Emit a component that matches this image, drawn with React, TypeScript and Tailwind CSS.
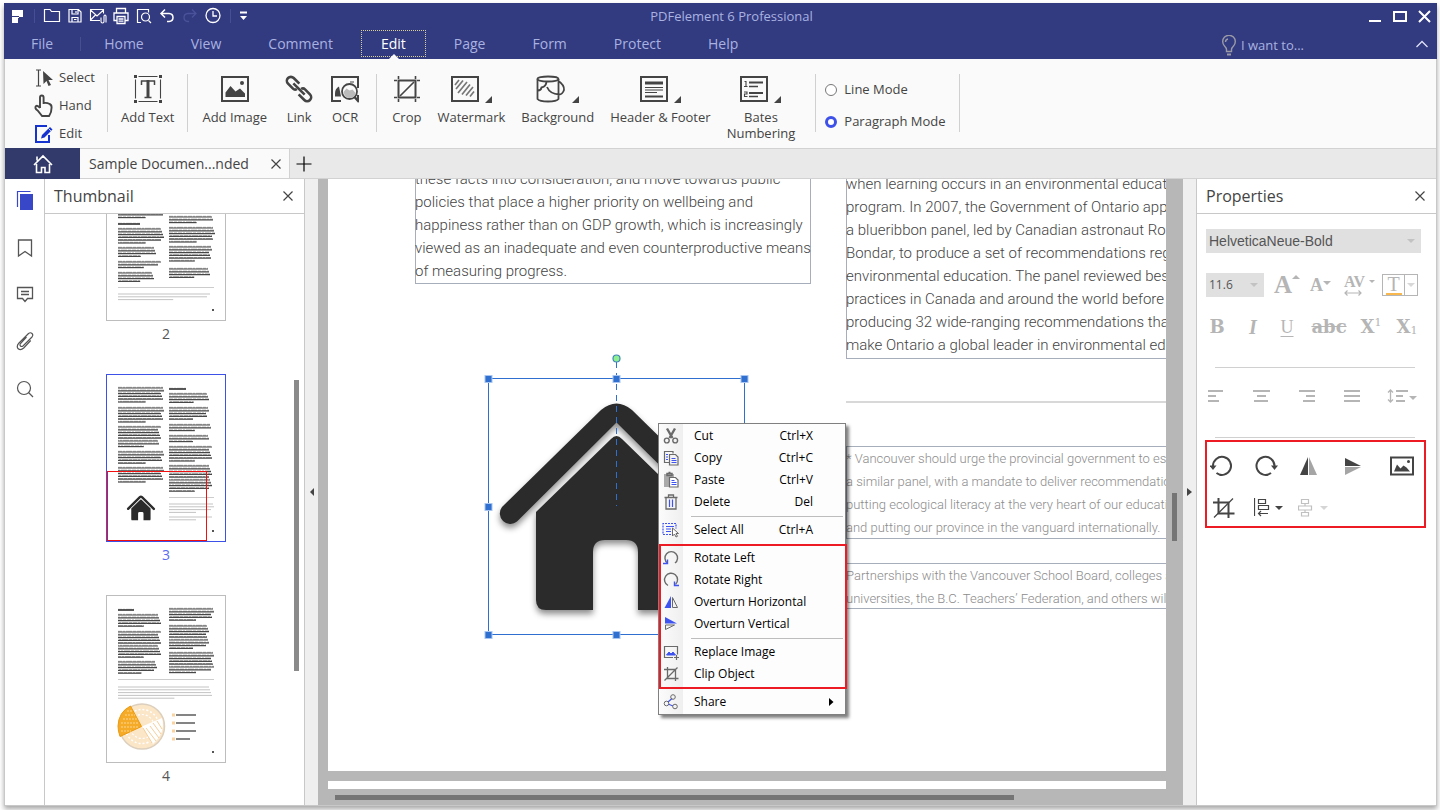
import type { ReactNode } from 'react'
import clsx from 'clsx'

type Block = { x: number; y: number; lines: number; light?: boolean; width?: number; heading?: boolean }

const menuTabs = ['Home', 'View', 'Comment', 'Edit', 'Page', 'Form', 'Protect', 'Help']

const thumbBlocks: Record<number, Block[]> = {
  2: [
    { x: 11, y: 58, lines: 3 },
    { x: 11, y: 70, lines: 1, width: 24, heading: true },
    { x: 11, y: 75, lines: 6 },
    { x: 11, y: 94, lines: 4, width: 38 },
    { x: 11, y: 108, lines: 3, width: 43 },
    { x: 11, y: 119, lines: 4, width: 37 },
    { x: 62, y: 63, lines: 3 },
    { x: 62, y: 74, lines: 6 },
    { x: 62, y: 93, lines: 6, width: 43 },
    { x: 62, y: 115, lines: 4, width: 42 },
    { x: 11, y: 140, lines: 3, light: true, width: 92 }
  ],
  3: [
    { x: 11, y: 13, lines: 6 },
    { x: 11, y: 33, lines: 6 },
    { x: 11, y: 52, lines: 8, width: 43 },
    { x: 11, y: 77, lines: 5 },
    { x: 11, y: 93, lines: 6 },
    { x: 62, y: 14, lines: 1, width: 19, heading: true },
    { x: 62, y: 19, lines: 4, width: 41 },
    { x: 62, y: 33, lines: 5, width: 40 },
    { x: 62, y: 50, lines: 3, width: 43 },
    { x: 62, y: 61, lines: 3, width: 40 },
    { x: 62, y: 72, lines: 6, width: 43 },
    { x: 62, y: 91, lines: 10, width: 43 },
    { x: 62, y: 129, lines: 4, light: true, width: 45 },
    { x: 62, y: 142, lines: 2, light: true, width: 45 }
  ],
  4: [
    { x: 11, y: 14, lines: 1, width: 18, heading: true },
    { x: 11, y: 19, lines: 5, width: 43 },
    { x: 11, y: 36, lines: 10, width: 43 },
    { x: 11, y: 66, lines: 5, width: 39 },
    { x: 62, y: 13, lines: 5, width: 45 },
    { x: 62, y: 30, lines: 9, width: 40 },
    { x: 62, y: 57, lines: 8, width: 45 },
    { x: 11, y: 91, lines: 5, light: true, width: 94 }
  ]
}

const leftText = [
  'these facts into consideration, and move towards public',
  'policies that place a higher priority on wellbeing and',
  'happiness rather than on GDP growth, which is increasingly',
  'viewed as an inadequate and even counterproductive means',
  'of measuring progress.'
]

const rightText = [
  'when learning occurs in an environmental education',
  'program. In 2007, the Government of Ontario appointed',
  'a blueribbon panel, led by Canadian astronaut Roberta',
  'Bondar, to produce a set of recommendations regarding',
  'environmental education. The panel reviewed best',
  'practices in Canada and around the world before',
  'producing 32 wide-ranging recommendations that will',
  'make Ontario a global leader in environmental education.'
]

const noteText = [
  '* Vancouver should urge the provincial government to establish',
  'a similar panel, with a mandate to deliver recommendations for',
  'putting ecological literacy at the very heart of our education',
  'and putting our province in the vanguard internationally.'
]

const partnerText = [
  'Partnerships with the Vancouver School Board, colleges and',
  'universities, the B.C. Teachers’ Federation, and others will'
]

function Icon({ w = 18, h = 18, className, children }: { w?: number; h?: number; className?: string; children: ReactNode }) {
  return (
    <svg
      width={w}
      height={h}
      viewBox={`0 0 ${w} ${h}`}
      fill="none"
      stroke="currentColor"
      aria-hidden="true"
      className={clsx('shrink-0', className)}
    >
      {children}
    </svg>
  )
}

const CloseIcon = () => (
  <Icon w={12} h={12}>
    <path d="M1.5 1.5l9 9M10.5 1.5l-9 9" strokeWidth="1.2" />
  </Icon>
)

/* ---------- title bar ---------- */

const quickTools: { label: string; dim?: boolean; icon: ReactNode }[] = [
  { label: 'Open', icon: <path d="M1.5 3v11.500h15v-10h-8l-1.500-2h-5.500z" strokeWidth="1.2" /> },
  {
    label: 'Save',
    icon: <path d="M3 2.500h9.500l2.500 2.500v10h-12zM6 2.500v4.500h6v-4.500M6 15v-4.500h6v4.500M10 4v2M8 12.500h2.500" strokeWidth="1.2" />
  },
  {
    label: 'Mail',
    icon: <path d="M11 13.500h-9.500v-11h13v4M1.500 3l6.500 6 6.500-6M1.500 13l5-5M12 10.500v4q0 1.500 1.500 1.500t1.500-1.500v-5q0-1.500 1-1.500t1 1.500v6" strokeWidth="1.100" />
  },
  {
    label: 'Print',
    icon: <path d="M4.500 6v-4.500h9v4.500M4.500 13.500h-2.500v-7.500h14v7.500h-2.500M5 9.500h8v7h-8zM6.500 12h5M6.500 14.200h5" strokeWidth="1.3" />
  },
  {
    label: 'Preview',
    icon: (
      <>
        <path d="M6 15.500h-3.500v-13h11v3M13.500 13.500l2.500 2.500" strokeWidth="1.200" />
        <circle cx="10.500" cy="10" r="4" strokeWidth="1.200" />
      </>
    )
  },
  { label: 'Undo', icon: <path d="M7 2.500l-4 4 4 4M3.500 6.500h7.500q4 .3 4 4t-4 4h-2" strokeWidth="1.500" /> },
  { label: 'Redo', dim: true, icon: <path d="M11 2.500l4 4-4 4M14.500 6.500h-7.500q-4 .3-4 4t4 4h1" strokeWidth="1.300" /> },
  {
    label: 'History',
    icon: (
      <>
        <circle cx="9" cy="8.500" r="7" strokeWidth="1.300" />
        <path d="M9 4v5h4" strokeWidth="1.300" />
      </>
    )
  }
]

function TitleBar() {
  return (
    <header className="shrink-0 bg-[#323a80] text-[#a9b2e0]">
      <div className="grid h-[27px] grid-cols-[1fr_auto_1fr] items-center pb-0.5">
        <div className="flex items-center pl-2">
          <Icon w={12} h={14} className="text-white">
            <path d="M0 1h11v7h-4v1h-1v5h-6v-6h-0z" fill="currentColor" stroke="none" />
            <path d="M0 7.500h7" stroke="#323a80" />
          </Icon>
          <span className="ml-[10px] mr-[5px] h-3.5 w-px bg-[#474f93]" />
          {quickTools.map((tool) => (
            <button
              key={tool.label}
              type="button"
              aria-label={tool.label}
              className={clsx('flex w-[23px] justify-center', tool.dim ? 'text-[#4a5399]' : 'text-white')}
            >
              <Icon>{tool.icon}</Icon>
            </button>
          ))}
          <span className="ml-[6px] mr-2 h-3.5 w-px bg-[#474f93]" />
          <button type="button" aria-label="Customize toolbar" className="text-white">
            <Icon w={9} h={10}>
              <path d="M1 1.500h7" strokeWidth="2" />
              <path d="M1 5h7l-3.500 4z" fill="currentColor" stroke="none" />
            </Icon>
          </button>
        </div>
        <h1 className="pl-[22px] text-[13px] leading-[24px]">PDFelement 6 Professional</h1>
        <div className="flex items-center justify-end gap-[11px] pr-[6px] text-white">
          <button type="button" aria-label="Minimize">
            <Icon w={13} h={14}>
              <path d="M0 12h12" strokeWidth="2" />
            </Icon>
          </button>
          <button type="button" aria-label="Maximize">
            <Icon w={14} h={14}>
              <path d="M1 3h12v9h-12z" strokeWidth="2" />
            </Icon>
          </button>
          <button type="button" aria-label="Close">
            <Icon w={13} h={14}>
              <path d="M1 2l11 11M12 2l-11 11" strokeWidth="2" />
            </Icon>
          </button>
        </div>
      </div>
      <nav className="flex h-[29px] items-center pb-0.5 pl-2 text-sm">
        <button type="button" className="px-[19px]">
          File
        </button>
        <span className="ml-2 mr-1 h-3.5 w-px bg-[#474f93]" />
        <div className="flex items-center gap-[9px]">
          {menuTabs.map((tab) => (
            <button
              key={tab}
              type="button"
              className={clsx(
                'relative h-[27px] border',
                tab === 'Edit' ? 'border-dotted border-[#d8cf9a] px-[19px] text-white' : 'border-transparent px-[18px]'
              )}
            >
              {tab}
              {tab === 'Edit' ? (
                <Icon w={10} h={5} className="absolute -bottom-[3px] left-[27px] text-[#fafafa]">
                  <path d="M0 5l5-5 5 5z" fill="currentColor" stroke="none" />
                </Icon>
              ) : null}
            </button>
          ))}
        </div>
        <label className="ml-auto flex items-center gap-1 pt-1">
          <Icon w={16} h={22} className="text-[#9a9ba6]">
            <path d="M5.500 16.500v-2q0-1.500-2-3.500a6.300 6.300 0 1 1 9 0q-2 2-2 3.500v2zM4.500 7q0-2.500 2.500-3" strokeWidth="1.400" />
            <path d="M6 19.500h4" strokeWidth="2" />
          </Icon>
          <input
            aria-label="I want to..."
            placeholder="I want to..."
            className="w-[174px] bg-transparent text-[13px] placeholder:text-[#a9b2e0] focus:outline-none"
          />
        </label>
        <button type="button" aria-label="Collapse ribbon" className="mr-2 text-[#dfe2f5]">
          <Icon w={14} h={8}>
            <path d="M1.500 7l5.500-5.500 5.500 5.500" strokeWidth="1.300" />
          </Icon>
        </button>
      </nav>
    </header>
  )
}

/* ---------- ribbon ---------- */

function Separator() {
  return <span className="mt-[15px] h-[58px] w-px shrink-0 bg-[#d0d0d0]" />
}

function RibbonButton({ label, icon, menu }: { label: string; icon: ReactNode; menu?: boolean }) {
  return (
    <button type="button" className="flex flex-col items-center pt-4 text-center text-[13px] leading-4">
      <span className="flex h-7 items-end gap-1.5">
        {icon}
        {menu ? (
          <Icon w={7} h={7}>
            <path d="M7 0v7h-7z" fill="#444" stroke="none" />
          </Icon>
        ) : null}
      </span>
      <span className="mt-1.5 whitespace-pre-line">{label}</span>
    </button>
  )
}

const Frame = ({ children }: { children: ReactNode }) => (
  <Icon w={28} h={28}>
    <path d="M1 2h26v24h-26z" strokeWidth="2" />
    {children}
  </Icon>
)

function Ribbon() {
  return (
    <section className="flex h-[89px] shrink-0 items-start bg-[#fafafa] text-[#444]">
      <div className="ml-[29px] flex w-[73px] flex-col pt-[5px] text-[13px]">
        <button type="button" className="flex h-7 items-center gap-[5px]">
          <Icon w={20} h={20}>
            <path d="M2 2h5M4.500 2v16M2 18h5" strokeWidth="1.200" />
            <path d="M9 3l10 9h-4.500l2.500 5-2.500 1-2-5-3 3z" fill="currentColor" stroke="none" />
          </Icon>
          Select
        </button>
        <button type="button" className="flex h-7 items-center gap-[5px]">
          <Icon w={20} h={24}>
            <path d="M6 14v-10.500q0-2 1.800-2t1.800 2v5.500q3.500-.5 6 1 2 .8 2 3.500 0 5-2.500 8.500h-7l-4.500-5.500q-3.500-2.500-1.500-4.500 1.500-1 3.900 2" strokeWidth="1.900" />
          </Icon>
          Hand
        </button>
        <button type="button" className="flex h-7 items-center gap-[5px]">
          <Icon w={20} h={20} className="text-[#1433cf]">
            <path d="M13 2h-11v16h13v-7" strokeWidth="2" />
            <path d="M7 14.500l1-3.500 8-8 2.500 2.500-8 8z" fill="currentColor" stroke="none" />
            <path d="M14.500 4.500l2.500 2.500" stroke="#fafafa" strokeWidth=".8" />
          </Icon>
          Edit
        </button>
      </div>
      <Separator />
      <div className="px-[13px]">
        <RibbonButton
          label="Add Text"
          icon={
            <Icon w={28} h={28}>
              <path d="M4.500 1.500h19M4.500 26.500h19M1.500 4.500v19M26.500 4.500v19" strokeWidth="1.100" />
              <path d="M0 0h3v3h-3zM25 0h3v3h-3zM0 25h3v3h-3zM25 25h3v3h-3z" fill="currentColor" stroke="none" />
              <path d="M7 6h14M7.500 5.500v4.500M20.500 5.500v4.500M10.500 22.500h7" strokeWidth="1.500" />
              <path d="M14 5v17" strokeWidth="3" />
            </Icon>
          }
        />
      </div>
      <Separator />
      <div className="flex gap-[18px] px-[14px]">
        <RibbonButton
          label="Add Image"
          icon={
            <Frame>
              <path d="M4.500 22v-4.500l5-6.500 5 5.500 4.500-3 5 5v3.500z" fill="currentColor" stroke="none" />
              <circle cx="21" cy="8" r="2" fill="currentColor" stroke="none" />
            </Frame>
          }
        />
        <RibbonButton
          label="Link"
          icon={
            <Icon w={28} h={28}>
              <g transform="rotate(45 14 14)" strokeWidth="2.600">
                <path d="M10.500 10h-8a4 4 0 0 0 0 8h7q2.500 0 3-2.500M17.500 18h8a4 4 0 0 0 0-8h-7q-2.500 0-3 2.500" />
                <path d="M6 14h16" />
              </g>
            </Icon>
          }
        />
        <RibbonButton
          label="OCR"
          icon={
            <Icon w={28} h={28}>
              <path d="M10 26h-9v-24h26v11M27 20v6" strokeWidth="2" />
              <path d="M4 21.500v-3q0-5 4-7l2 10zM19 6.500h4v1h-4z" fill="currentColor" stroke="none" />
              <circle cx="18.500" cy="16.500" r="7.500" fill="#fafafa" strokeWidth="1.800" />
              <path d="M12.500 17l3-3.500 3 2 3-1 3.500 4q-2 4.500-6.500 4.500t-6-6z" fill="#bbb" stroke="none" />
              <path d="M23.500 22l4.500 5" strokeWidth="2.500" />
            </Icon>
          }
        />
      </div>
      <span className="w-[3px]" />
      <Separator />
      <div className="flex gap-4 px-[15px]">
        <RibbonButton
          label="Crop"
          icon={
            <Icon w={28} h={28}>
              <path d="M5.500 5.500h17v17h-17z" strokeWidth="2" />
              <path d="M7 21l14-14M5.500 1v3M22.500 1v3M5.500 24v3M22.500 24v3M1 5.500h3M1 22.500h3M24 5.500h3M24 22.500h3" strokeWidth="1.600" />
            </Icon>
          }
        />
        <RibbonButton
          label="Watermark"
          menu
          icon={
            <Frame>
              <path d="M4 10l4-5M5 14l7-8.500M7 18l9-11M11 19.500l8-10M15 20.500l7-8.500M19 21.500l4-5" stroke="#777" strokeWidth="1.700" />
            </Frame>
          }
        />
        <RibbonButton
          label="Background"
          menu
          icon={
            <Icon w={30} h={28}>
              <ellipse cx="12" cy="4" rx="10.500" ry="2.500" strokeWidth="1.800" />
              <path d="M1.500 4v20q2 2.500 10.500 2.500t10.500-2.500v-20M22.500 6q6 4 5.500 9-1.500 4.500-5 4.500-9-.5-12-7.500M2 15.500q3 0 3.500-3 5-1 5-6.500" strokeWidth="1.800" />
            </Icon>
          }
        />
        <RibbonButton
          label="Header & Footer"
          menu
          icon={
            <Frame>
              <path d="M5 8h18" strokeWidth="3" />
              <path d="M5 12.500h18M5 15h18M5 17.500h12" />
              <path d="M5 21.500h18" strokeWidth="2" />
            </Frame>
          }
        />
        <RibbonButton
          label={'Bates\nNumbering'}
          menu
          icon={
            <Frame>
              <path d="M9 7.500h14M9 18h14" strokeWidth="2" />
              <path d="M9 11.500h9M9 21.500h9" strokeWidth="1.300" />
              <path d="M4.500 6.500h1.500v5M4 11.500h3.500M4 17h3v2h-2.500v2.500h3" strokeWidth="1.100" />
            </Frame>
          }
        />
      </div>
      <span className="w-[5px]" />
      <Separator />
      <div className="flex w-[143px] flex-col pl-[9px] pt-[15px] text-[13px]">
        {['Line Mode', 'Paragraph Mode'].map((mode) => (
          <label key={mode} className="flex h-8 items-center gap-[7px] whitespace-nowrap">
            <input
              type="radio"
              name="edit-mode"
              defaultChecked={mode === 'Paragraph Mode'}
              className="size-3 appearance-none rounded-full border border-[#777] bg-white checked:border-[3px] checked:border-[#3d50e8]"
            />
            {mode}
          </label>
        ))}
      </div>
      <Separator />
    </section>
  )
}

function DocumentTabs() {
  return (
    <div className="flex h-[31px] shrink-0 border-y border-[#d2d2d2] bg-[#e9e9e9]">
      <button type="button" aria-label="Home" className="-my-px flex w-[75px] items-center justify-center bg-[#323a6c] text-white">
        <Icon w={20} h={20}>
          <path d="M1 11l9-9 9 9M3.500 10v8.500h5v-5h3.500v5h4.500v-8.500M4 2.500v4" strokeWidth="1.600" />
        </Icon>
      </button>
      <div className="flex items-center border-r border-[#d2d2d2] bg-[#fafafa] pl-[9px] pr-[7px] text-[#444]">
        <span className="text-sm">Sample Documen...nded</span>
        <button type="button" aria-label="Close tab" className="ml-[21px]">
          <CloseIcon />
        </button>
      </div>
      <button type="button" aria-label="New tab" className="pl-1.5 text-black">
        <Icon w={16} h={16}>
          <path d="M8 .5v15M.5 8h15" strokeWidth="1.200" />
        </Icon>
      </button>
    </div>
  )
}

/* ---------- left side ---------- */

function SideRail() {
  return (
    <aside className="flex w-10 shrink-0 flex-col items-center gap-[25px] border-r border-[#c8c8c8] bg-white pt-[11px] text-[#555]">
      <button type="button" aria-label="Thumbnails" className="text-[#3847c8]">
        <Icon w={18} h={22}>
          <path d="M1.500 17v-15.500h13" strokeWidth="1.200" />
          <path d="M4 4h13v16h-13z" fill="currentColor" stroke="none" />
        </Icon>
      </button>
      <button type="button" aria-label="Bookmarks">
        <Icon w={18} h={22}>
          <path d="M2.500 3h13v16l-6.500-4.500-6.500 4.500z" strokeWidth="1.300" />
        </Icon>
      </button>
      <button type="button" aria-label="Comments">
        <Icon w={18} h={22}>
          <path d="M1.500 3.500h15v11h-5l-2.500 3-2.500-3h-5zM5 7.500h8M5 10.500h8" strokeWidth="1.300" />
        </Icon>
      </button>
      <button type="button" aria-label="Attachments">
        <Icon w={18} h={22}>
          <path d="M10.500 6l-6 6.500q-1 1.500 0 2.500t2.500 0l9-9q1.500-2 0-3.500t-3.500 0l-9.500 9.500q-3 3-.8 5.800 2.500 2 5.500-.8l7-7.500" strokeWidth="1.200" />
        </Icon>
      </button>
      <button type="button" aria-label="Search">
        <Icon w={18} h={22}>
          <circle cx="8" cy="10" r="6.500" strokeWidth="1.200" />
          <path d="M12.500 14.500l4.500 4.500" strokeWidth="1.200" />
        </Icon>
      </button>
    </aside>
  )
}

function GreekBlock({ block }: { block: Block }) {
  const full = block.width ?? 46
  return (
    <g>
      {Array.from({ length: block.lines }, (_, i) => {
        const last = i === block.lines - 1 && block.lines > 1
        const width = last ? full * 0.6 : full - ((i * 7 + block.y) % 4)
        const y = block.y + i * 2.8
        return (
          <g key={i} stroke={block.light ? '#b4b4b4' : '#484848'}>
            <path d={`M${block.x} ${y}h${width}`} strokeWidth={block.light ? 0.8 : block.heading ? 1.8 : 1.2} />
            {block.light ? null : (
              <path
                d={`M${block.x} ${y - 0.7}h${width}`}
                strokeWidth=".8"
                strokeOpacity=".5"
                strokeDasharray="4 1 2 1 6 1 3 1"
                strokeDashoffset={(i * 5) % 11}
              />
            )}
          </g>
        )
      })}
    </g>
  )
}

function HouseShape() {
  return (
    <g fill="#2b2b2b" stroke="none">
      <path d="M14 129L113 32q15.500-13 31 0l99 97a10 10 0 0 1-14 15L128.500 44.500L29 143.500a10.500 10.500 0 0 1-15-14.500z" />
      <path d="M123 61q5.500-6 11 0l75 73v88q0 10-10 10h-49v-58q0-12-12-12h-21q-12 0-12 12v58h-47q-10 0-10-10v-88z" />
    </g>
  )
}

function PieChart() {
  return (
    <g>
      <circle cx="35" cy="130.500" r="22.500" fill="#fbe6c8" stroke="#dccfbd" strokeWidth="1.500" />
      <circle cx="35" cy="130.500" r="17" stroke="#fff" strokeWidth="1.500" strokeDasharray="2 2" />
      <circle cx="35" cy="130.500" r="12" stroke="#fff" strokeWidth="1.200" strokeDasharray="2 2" />
      <path d="M35 130.500L55 122q4 14-9 26z" fill="#fff" stroke="none" />
      <path d="M39 132l10 13M43 130l9 12M46 127l8 11M50 125l5 8M36 132l9 15" stroke="#f6cf9b" />
      <path d="M34.500 130.500L23.500 110q-12 6-12.500 20 0 5 2 10.500z" fill="#f6ab28" stroke="#ea9a10" />
      <path d="M16 123h14M14 127h18M14 131h18M14 135h10M18 119h10M20 115h6" stroke="#fbd690" strokeDasharray="2 1" />
      {[119, 127, 135, 143].map((y, i) => (
        <g key={y}>
          <path d={`M65 ${y}h3`} stroke="#fad3a0" strokeWidth="3" />
          <path d={`M69 ${y}h${[20, 19, 20, 14][i]}`} stroke="#333" strokeWidth="1.200" />
        </g>
      ))}
    </g>
  )
}

function Thumbnail({ page, selected }: { page: number; selected?: boolean }) {
  return (
    <li className="flex flex-col items-center">
      <button
        type="button"
        aria-label={`Page ${page}`}
        className={clsx('relative border bg-white', selected ? 'border-[#3d50e8]' : 'border-[#bdbdbd]')}
      >
        <Icon w={118} h={166}>
          {thumbBlocks[page].map((block) => (
            <GreekBlock key={`${block.x}-${block.y}`} block={block} />
          ))}
          {page === 2 ? <path d="M11 133.500h96" stroke="#ccc" /> : null}
          {page === 3 ? <path d="M62 122.500h45" stroke="#ccc" /> : null}
          {page === 4 ? <path d="M11 83.500h96" stroke="#ccc" /> : null}
          {page === 3 ? (
            <g transform="translate(18.500 117.500) scale(.12)">
              <HouseShape />
            </g>
          ) : null}
          {page === 4 ? <PieChart /> : null}
          <path d="M105 156h2" stroke="#555" strokeWidth="2" />
        </Icon>
        {selected ? <span className="absolute left-0 top-24 h-[70px] w-[100px] border border-[#f01010]" /> : null}
      </button>
      <span className={clsx('h-[53px] text-sm leading-[26px]', selected ? 'text-[#5b6bf0]' : 'text-[#555]')}>{page}</span>
    </li>
  )
}

function PanelHeader({ title }: { title: string }) {
  return (
    <div className="flex h-[35px] shrink-0 items-center justify-between border-b border-[#c8c8c8] pl-[9px] pr-2.5 text-[#444]">
      <h2 className="text-base">{title}</h2>
      <button type="button" aria-label={`Close ${title}`}>
        <CloseIcon />
      </button>
    </div>
  )
}

function ThumbnailPanel() {
  return (
    <aside className="flex w-[260px] shrink-0 flex-col border-r border-[#c8c8c8] bg-white">
      <PanelHeader title="Thumbnail" />
      <div className="relative min-h-0 flex-1 overflow-hidden pr-[17px]">
        <ul className="-mt-[61px]">
          <Thumbnail page={2} />
          <Thumbnail page={3} selected />
          <Thumbnail page={4} />
        </ul>
        <span className="absolute right-[5px] top-[166px] h-[291px] w-[5px] bg-[#8a8a8a]" />
      </div>
    </aside>
  )
}

function CollapseStrip({ direction }: { direction: 'left' | 'right' }) {
  return (
    <button
      type="button"
      aria-label={direction === 'left' ? 'Collapse thumbnails' : 'Collapse properties'}
      className="flex w-[13px] shrink-0 items-center justify-center bg-[#efefef] text-[#444]"
    >
      <Icon w={5} h={8}>
        <path d={direction === 'left' ? 'M5 0v8l-4-4z' : 'M0 0v8l5-4z'} fill="currentColor" stroke="none" />
      </Icon>
    </button>
  )
}

/* ---------- document ---------- */

function TextLines({ lines }: { lines: string[] }) {
  return (
    <p className="-ml-px whitespace-nowrap leading-[23px]">
      {lines.map((line) => (
        <span key={line} className="block">
          {line}
        </span>
      ))}
    </p>
  )
}

const handles = [
  [0, 0],
  [128, 0],
  [256, 0],
  [0, 128],
  [256, 128],
  [0, 256],
  [128, 256],
  [256, 256]
]

function SelectedHouse() {
  return (
    <svg width="270" height="290" viewBox="-7 -26 270 290" fill="none" className="-ml-[1px] block">
      <g className="drop-shadow-[0_4px_3px_rgba(0,0,0,0.45)]">
        <HouseShape />
      </g>
      <path d="M.5 .5h256v256h-256z" stroke="#2f6fd0" />
      <path d="M128.500 -16v144" stroke="#2f6fd0" strokeDasharray="6 5" />
      {handles.map(([x, y]) => (
        <rect key={`${x}-${y}`} x={x - 3} y={y - 2.5} width="7" height="7" fill="#2f6fd0" stroke="#a9c6f2" />
      ))}
      <circle cx="128.500" cy="-19.500" r="3.500" fill="#8ff08f" stroke="#3f86b8" strokeWidth="1.200" />
    </svg>
  )
}

type MenuEntry = { label: string; shortcut?: string; icon: ReactNode; submenu?: boolean }

const accent = '#3f53f0'

const editEntries: MenuEntry[] = [
  {
    label: 'Cut',
    shortcut: 'Ctrl+X',
    icon: (
      <>
        <path d="M5 1.500l5.500 9.500M13 1.500l-5.500 9.500" strokeWidth="2.400" />
        <circle cx="4.800" cy="13.500" r="2.400" strokeWidth="1.400" />
        <circle cx="13.200" cy="13.500" r="2.400" strokeWidth="1.400" />
      </>
    )
  },
  {
    label: 'Copy',
    shortcut: 'Ctrl+C',
    icon: (
      <>
        <path d="M7 13.500h-4.500v-11h8.500v2M7.500 5.500h6l2.500 2.500v8h-8.500z" strokeWidth="1.200" />
        <path d="M4 5.500h2M4 8h2M4 10.500h2M9.500 9.500h4M9.500 11.500h5M9.500 13.500h5" stroke={accent} />
      </>
    )
  },
  {
    label: 'Paste',
    shortcut: 'Ctrl+V',
    icon: (
      <>
        <path d="M2 3h10v3h-5v10h-5z" fill="#aaa" stroke="none" />
        <path d="M5 2.500h5v2h-5zM6.500 1.500h2" strokeWidth="1.500" />
        <path d="M7.500 6.500h6l2.500 2.500v7h-8.500z" strokeWidth="1.200" fill="#fff" />
        <path d="M9.500 9.500h3M9.500 11.500h5M9.500 13.500h5" stroke={accent} />
      </>
    )
  },
  {
    label: 'Delete',
    shortcut: 'Del',
    icon: (
      <>
        <path d="M2.500 4.500h13M6.500 4v-2h5v2M4 5v11h10v-11" strokeWidth="1.300" />
        <path d="M7.500 6.500v7.500M10.500 6.500v7.500" stroke={accent} strokeWidth="1.200" />
      </>
    )
  }
]

const selectEntry: MenuEntry = {
  label: 'Select All',
  shortcut: 'Ctrl+A',
  icon: (
    <>
      <path d="M9 13.500h-8v-11h13v5" stroke={accent} strokeDasharray="2 1" strokeWidth="1.200" />
      <path d="M4 5.500h8M4 8h5M4 10.500h5" stroke={accent} />
      <path d="M10.500 7v8l2-2 1.500 3 1.500-.7-1.500-2.800h2.500z" fill="#fff" />
    </>
  )
}

const imageEntries: MenuEntry[] = [
  {
    label: 'Rotate Left',
    icon: (
      <>
        <path d="M5.500 14a6.300 6.300 0 1 1 7.500 0" strokeWidth="1.400" />
        <path d="M1 14.500h4.500v-4" stroke={accent} strokeWidth="1.400" />
      </>
    )
  },
  {
    label: 'Rotate Right',
    icon: (
      <>
        <path d="M6 14.500a6.500 6.500 0 1 1 7.500-1" strokeWidth="1.400" />
        <path d="M17 14.500h-4.500v-4" stroke={accent} strokeWidth="1.400" />
      </>
    )
  },
  {
    label: 'Overturn Horizontal',
    icon: (
      <>
        <path d="M9 3v12h-6.500z" fill={accent} stroke="none" />
        <path d="M10.500 4.500v10h5z" />
      </>
    )
  },
  {
    label: 'Overturn Vertical',
    icon: (
      <>
        <path d="M3 2v6.500h12z" fill={accent} stroke="none" />
        <path d="M3.500 10v4.500l9-4.500z" />
      </>
    )
  }
]

const objectEntries: MenuEntry[] = [
  {
    label: 'Replace Image',
    icon: (
      <>
        <path d="M11 14.500h-8.500v-11h13v8M14.500 12v5M12 14.500h5" strokeWidth="1.200" />
        <path d="M4.500 12l2.500-3 2 2 2-2 2.500 3z" fill={accent} stroke={accent} />
      </>
    )
  },
  { label: 'Clip Object', icon: <path d="M5.500 2v11.500h11M2 4.500h11.500v11.500M2.500 15.500l13-13" strokeWidth="1.300" /> }
]

const shareEntry: MenuEntry = {
  label: 'Share',
  submenu: true,
  icon: (
    <>
      <path d="M6 9l4-3.500M6 11l5 2" stroke={accent} strokeWidth="1.200" />
      <circle cx="11" cy="4" r="2.300" />
      <circle cx="4.500" cy="10.500" r="2.300" />
      <circle cx="13" cy="13.500" r="2.300" />
    </>
  )
}

function MenuRow({ entry }: { entry: MenuEntry }) {
  return (
    <button type="button" role="menuitem" className="flex h-[22px] w-full items-center pl-[3px] text-xs text-black">
      <Icon className="text-[#6a6a6a]">{entry.icon}</Icon>
      <span className="ml-3.5">{entry.label}</span>
      {entry.shortcut ? <span className="ml-auto mr-8">{entry.shortcut}</span> : null}
      {entry.submenu ? (
        <Icon w={5} h={8} className="ml-auto mr-[11px]">
          <path d="M0 0v8l4.500-4z" fill="#000" stroke="none" />
        </Icon>
      ) : null}
    </button>
  )
}

function MenuDivider() {
  return (
    <div className="ml-8 mr-0.5 h-1.5 pt-[3px]">
      <div className="h-px bg-[#bdbdbd]" />
    </div>
  )
}

function ContextMenu() {
  return (
    <div
      role="menu"
      className="absolute left-[330px] top-[244px] w-[188px] border border-[#808080] bg-[#fdfdfd] bg-[linear-gradient(to_right,#fdfdfd_1px,#fbfbfb_1px,#efefef_24px,#fdfdfd_24px)] py-px font-['Open_Sans',sans-serif] shadow-[3px_3px_3px_rgba(0,0,0,0.5)]"
    >
      {editEntries.map((entry) => (
        <MenuRow key={entry.label} entry={entry} />
      ))}
      <MenuDivider />
      <MenuRow entry={selectEntry} />
      <div className="relative py-1.5">
        <span className="pointer-events-none absolute -right-0.5 bottom-[2px] left-0 top-[3px] border-2 border-[#ed1c24]" />
        {imageEntries.map((entry) => (
          <MenuRow key={entry.label} entry={entry} />
        ))}
        <MenuDivider />
        {objectEntries.map((entry) => (
          <MenuRow key={entry.label} entry={entry} />
        ))}
      </div>
      <MenuRow entry={shareEntry} />
    </div>
  )
}

function DocumentView() {
  return (
    <main className="relative flex min-w-0 flex-1 flex-col bg-[#b7b7b7] pl-2.5 pr-[17px] font-['Roboto','Liberation_Sans',sans-serif] text-[15px] font-light text-[#444]">
      <div className="relative h-[592px] shrink-0 overflow-hidden bg-white">
        <div className="flex w-max">
          <div className="w-[518px] shrink-0">
            <div className="-mt-[13px] ml-[87px] w-[396px] border border-[#a6aebb] pt-px">
              <TextLines lines={leftText} />
            </div>
            <div className="ml-[154px] mt-[68px]">
              <SelectedHouse />
            </div>
          </div>
          <div className="w-[440px] shrink-0">
            <div className="-mt-2 border border-[#a6aebb] py-px">
              <TextLines lines={rightText} />
            </div>
            <hr className="mt-[42px] border-t-2 border-[#d8d8d8]" />
            <div className="mt-[43px] h-[93px] border border-[#a6aebb] text-[13px] text-[#8c8c8c]">
              <TextLines lines={noteText} />
            </div>
            <div className="mt-6 h-[46px] border border-[#a6aebb] text-[13px] text-[#8c8c8c]">
              <TextLines lines={partnerText} />
            </div>
          </div>
        </div>
      </div>
      <div className="mt-2.5 h-2 shrink-0 bg-white" />
      <div className="ml-[7px] mr-[152px] mt-1.5 h-[5px] shrink-0 bg-[#757575]" />
      <span className="absolute right-[6px] top-[314px] h-12 w-[5px] bg-[#757575]" />
      <div className="absolute inset-y-0 left-2.5 font-normal">
        <ContextMenu />
      </div>
    </main>
  )
}

/* ---------- properties ---------- */

const Caret = ({ className }: { className?: string }) => (
  <Icon w={8} h={4} className={className}>
    <path d="M0 0h8l-4 4z" fill="currentColor" stroke="none" />
  </Icon>
)

function FakeSelect({ label, value, className }: { label: string; value: string; className: string }) {
  return (
    <div className={clsx('relative', className)}>
      <select
        aria-label={label}
        className="h-6 w-full appearance-none rounded-none bg-[#e0e0e0] pl-[3px] leading-6 text-[#555]"
      >
        <option>{value}</option>
      </select>
      <Caret className="pointer-events-none absolute right-[6px] top-[10px] text-[#c2c2c2]" />
    </div>
  )
}

const alignments = [
  { label: 'Align left', d: 'M1 3h15M1 8h8M1 13h11' },
  { label: 'Align center', d: 'M1 3h17M5 8h9M2 13h14' },
  { label: 'Align right', d: 'M2 3h16M9 8h9M6 13h12' },
  { label: 'Justify', d: 'M2 3h16M2 8h16M2 13h16' }
]

function Properties() {
  return (
    <aside className="flex w-[240px] shrink-0 flex-col border-l border-[#c8c8c8] bg-white">
      <PanelHeader title="Properties" />
      <div className="pt-[15px]">
        <FakeSelect
          label="Font"
          value="HelveticaNeue-Bold"
          className="ml-[9px] mr-[15px] font-['Liberation_Sans',sans-serif] text-sm"
        />
        <div className="mt-5 flex h-6 items-center gap-2.5 pl-[9px] font-['Liberation_Serif',serif] text-[#b5b5b5]">
          <FakeSelect label="Font size" value="11.6" className="w-[58px] font-['Open_Sans',sans-serif] text-xs" />
          <button type="button" aria-label="Increase font size" className="flex w-[26px] items-center text-[25px] font-bold leading-6">
            A
            <Caret className="mb-4 rotate-180" />
          </button>
          <button type="button" aria-label="Decrease font size" className="flex w-6 items-center text-lg font-bold leading-6">
            A
            <Caret className="mb-1" />
          </button>
          <button type="button" aria-label="Character spacing" className="flex w-7 items-start gap-1 text-base font-bold leading-4">
            <span className="flex flex-col">
              AV
              <Icon w={18} h={6}>
                <path d="M1 3h16M3.500 .5l-2.500 2.500 2.500 2.500M14.500 .5l2.500 2.500-2.500 2.500" strokeWidth="1.200" />
              </Icon>
            </span>
            <Icon w={6} h={4} className="mt-1.5">
              <path d="M0 0h6l-3 3z" fill="currentColor" stroke="none" />
            </Icon>
          </button>
          <button type="button" aria-label="Font color" className="flex h-[22px] border border-[#b5b5b5] text-xl leading-[18px]">
            <span className="flex w-[22px] flex-col items-center border-r border-[#b5b5b5]">
              T
              <span className="h-[3px] w-4 bg-[#f8b84e]" />
            </span>
            <Caret className="mx-[2px] mt-2 text-[#d8d8d8]" />
          </button>
        </div>
        <div className="mt-[18px] flex h-6 items-center font-['DejaVu_Serif',serif] text-lg leading-6 text-[#b5b5b5]">
          <button type="button" aria-label="Bold" className="w-10 font-bold">B</button>
          <button type="button" aria-label="Italic" className="w-8 font-['Liberation_Serif',serif] text-xl font-bold italic">I</button>
          <button type="button" aria-label="Underline" className="w-9 font-['Liberation_Serif',serif] underline underline-offset-3">U</button>
          <button type="button" aria-label="Strikethrough" className="w-12 font-bold line-through">abc</button>
          <button type="button" aria-label="Superscript" className="flex w-9 justify-center font-bold">
            X<span className="text-[11px] font-normal leading-4">1</span>
          </button>
          <button type="button" aria-label="Subscript" className="flex w-9 justify-center font-bold">
            X<span className="self-end text-[11px] font-normal leading-4">1</span>
          </button>
        </div>
        <hr className="ml-[18px] mr-[21px] mt-7 border-[#d0d0d0]" />
        <div className="mt-5 flex gap-[26px] pl-2.5 text-[#b5b5b5]">
          {alignments.map((item) => (
            <button key={item.label} type="button" aria-label={item.label}>
              <Icon w={19} h={16}>
                <path d={item.d} strokeWidth="2" />
              </Icon>
            </button>
          ))}
          <button type="button" aria-label="Line spacing">
            <Icon w={30} h={16}>
              <path d="M3.500 2v12M1 4.500l2.500-2.500 2.500 2.500M1 11.500l2.500 2.500 2.500-2.500" strokeWidth="1.300" />
              <path d="M9 3h12M9 8h7M9 13h9" strokeWidth="2" />
              <path d="M22 8h8l-4 4z" fill="currentColor" stroke="none" />
            </Icon>
          </button>
        </div>
        <hr className="ml-[18px] mr-[21px] mt-[33px] border-[#d0d0d0]" />
        <div className="ml-2 mr-2.5 mt-0.5 flex h-[88px] flex-col gap-[18px] border-2 border-[#ed1c24] pl-[3px] pt-3 text-[#444]">
          <div className="flex items-center gap-5">
            <button type="button" aria-label="Rotate left">
              <Icon w={24} h={24}>
                <path d="M3 12a9 9 0 1 1 3.500 7M9 20.500a9 9 0 0 0 3 .5" strokeWidth="2" />
                <path d="M-.5 11.500h7l-3.500 4.500z" fill="currentColor" stroke="none" />
              </Icon>
            </button>
            <button type="button" aria-label="Rotate right">
              <Icon w={24} h={24}>
                <path d="M20.500 12a9 9 0 1 0-3.500 7M14.500 20.500a9 9 0 0 1-3 .5" strokeWidth="2" />
                <path d="M24 11.500h-7l3.500 4.500z" fill="currentColor" stroke="none" />
              </Icon>
            </button>
            <button type="button" aria-label="Flip horizontal">
              <Icon w={24} h={24}>
                <path d="M10 3v18h-8z" fill="currentColor" stroke="none" />
                <path d="M11 3v18h8z" fill="#a5a5a5" stroke="none" />
              </Icon>
            </button>
            <button type="button" aria-label="Flip vertical">
              <Icon w={24} h={24}>
                <path d="M3 4v8h16z" fill="currentColor" stroke="none" />
                <path d="M3 21v-8h16z" fill="#a5a5a5" stroke="none" />
              </Icon>
            </button>
            <button type="button" aria-label="Replace image">
              <Icon w={30} h={24}>
                <path d="M5 3.500h22v17h-22z" strokeWidth="2" />
                <path d="M8 17.500l3-7 3.500 4 3-3 3 2 3.500 4z" fill="currentColor" stroke="none" />
                <circle cx="22.500" cy="7.500" r="1.500" fill="currentColor" stroke="none" />
              </Icon>
            </button>
          </div>
          <div className="flex items-center gap-3">
            <button type="button" aria-label="Crop">
              <Icon w={32} h={24}>
                <path d="M8.500 2v15.500h16M3 6.500h15.500v15.500" strokeWidth="2" />
                <path d="M4 21.500l19-19" strokeWidth="1.300" />
              </Icon>
            </button>
            <button type="button" aria-label="Align objects">
              <Icon w={32} h={24}>
                <path d="M.5 2v18M4.500 3.500h7v4h-7zM4.500 9.500h10v4h-10zM4 17.500h10M7 15l-2.500 2.500 2.500 2.500" strokeWidth="1.200" />
                <path d="M21 10h8l-4 4z" fill="currentColor" stroke="none" />
              </Icon>
            </button>
            <button type="button" aria-label="Distribute objects" className="text-[#c0c0c0]">
              <Icon w={32} h={24}>
                <path d="M3.500 3.500h7v4h-7zM.5 10h13v4h-13zM3.500 16.500h7v3.500h-7zM7 7.500v2.500M7 14v2.500" strokeWidth="1.200" />
                <path d="M22 10h8l-4 4z" fill="#d5d5d5" stroke="none" />
              </Icon>
            </button>
          </div>
        </div>
      </div>
    </aside>
  )
}

export default function App() {
  return (
    <div className="flex h-screen flex-col bg-white pb-1 pl-1 pr-[3px] pt-[3px] font-['Open_Sans',sans-serif]">
      <div className="flex min-h-0 flex-1 flex-col shadow-[0_3px_5px_rgba(0,0,0,0.35)]">
        <TitleBar />
        <div className="flex min-h-0 flex-1 flex-col border-x border-b border-[#c8c8c8]">
          <Ribbon />
          <DocumentTabs />
          <div className="flex min-h-0 flex-1">
            <SideRail />
            <ThumbnailPanel />
            <CollapseStrip direction="left" />
            <DocumentView />
            <CollapseStrip direction="right" />
            <Properties />
          </div>
        </div>
      </div>
    </div>
  )
}
